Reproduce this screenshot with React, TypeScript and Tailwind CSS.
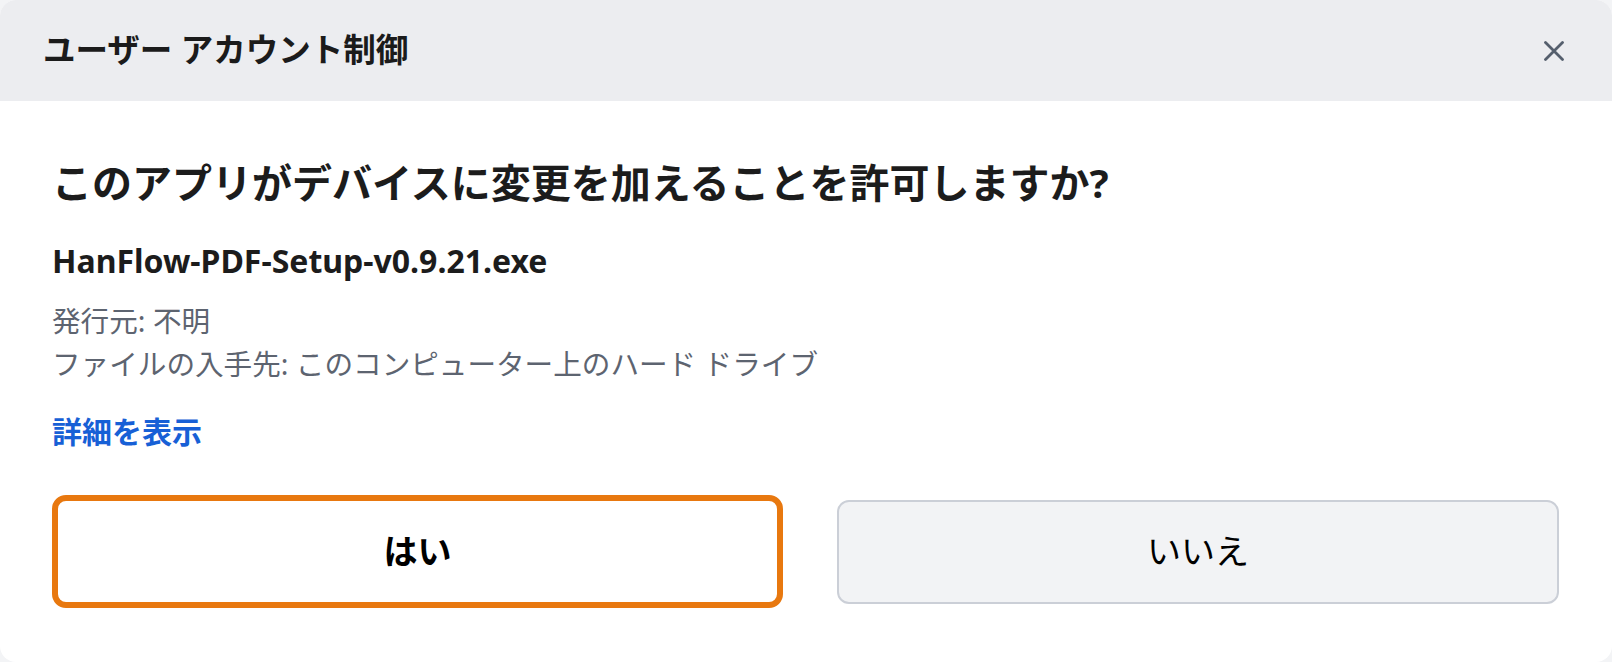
export default function App() {
  const font = { fontFamily: '"Noto Sans", "Noto Sans CJK JP", sans-serif' };
  return (
    <div className="min-h-screen bg-[#f3f4f6]" style={font}>
      <div className="w-[1612px] h-[662px] bg-white rounded-[16px] overflow-hidden flex flex-col">
        {/* Title bar */}
        <div className="h-[101px] shrink-0 bg-[#ecedf0] flex items-center justify-between pl-[43px] pr-[47px]">
          <h1 className="text-[32.5px] font-bold text-[#1b1b1b] leading-none">ユーザー アカウント制御</h1>
          <button className="w-[22px] h-[22px] flex items-center justify-center text-[#555f6d]">
            <svg viewBox="0 0 20 20" className="w-[20px] h-[20px]" fill="none" stroke="currentColor" strokeWidth="2.8" strokeLinecap="round">
              <path d="M1.5 1.5l17 17M18.5 1.5l-17 17" />
            </svg>
          </button>
        </div>

        {/* Body */}
        <div className="flex-1 flex flex-col pl-[52px] pr-[53px] pt-[54px]">
          <h2 className="text-[40px] font-bold leading-[56px] text-[#1c1c1c]">
            このアプリがデバイスに変更を加えることを許可しますか?
          </h2>
          <p className="mt-[28px] text-[32px] font-bold leading-[44px] text-[#1c1c1c]">
            HanFlow-PDF-Setup-v0.9.21.exe
          </p>
          <div className="mt-[16px] text-[28.6px] leading-[43px] text-[#5d6470]">
            <p>発行元: 不明</p>
            <p>ファイルの入手先: このコンピューター上のハード ドライブ</p>
          </div>
          <a href="#" className="mt-[25px] self-start text-[30px] font-bold leading-[43px] text-[#1760d6]">
            詳細を表示
          </a>

          <div className="mt-[42px] flex items-center">
            <button className="w-[731px] h-[113px] rounded-[14px] border-[6px] border-[#e8780f] bg-white text-[34px] font-bold text-black">
              はい
            </button>
            <button className="ml-[54px] flex-1 h-[104px] rounded-[12px] border-2 border-[#cbcfd7] bg-[#f2f3f5] text-[34px] text-black">
              いいえ
            </button>
          </div>
        </div>
      </div>
    </div>
  );
}
